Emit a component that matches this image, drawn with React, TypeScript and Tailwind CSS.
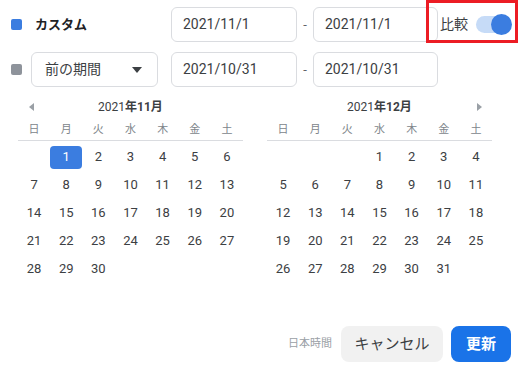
import { useState } from 'react'

const WEEK = ['日', '月', '火', '水', '木', '金', '土']

function monthCells(offset: number, days: number) {
  const cells: (number | null)[] = []
  for (let i = 0; i < offset; i++) cells.push(null)
  for (let d = 1; d <= days; d++) cells.push(d)
  while (cells.length % 7 !== 0) cells.push(null)
  return cells
}

function Calendar({
  title,
  offset,
  days,
  selected,
  prev,
  next,
}: {
  title: [string, string]
  offset: number
  days: number
  selected?: number
  prev?: boolean
  next?: boolean
}) {
  const cells = monthCells(offset, days)
  return (
    <div className="w-[225px]">
      {/* month header */}
      <div className="relative flex h-[20px] items-center justify-center text-[12px] text-[#3c4043]">
        {prev && (
          <span className="absolute left-[11px] top-[6px] h-0 w-0 border-y-[4px] border-r-[5px] border-y-transparent border-r-[#9aa0a6]" />
        )}
        <span>
          {title[0]}
          <span className="font-bold">{title[1]}</span>
        </span>
        {next && (
          <span className="absolute right-[10px] top-[6px] h-0 w-0 border-y-[4px] border-l-[5px] border-y-transparent border-l-[#9aa0a6]" />
        )}
      </div>

      {/* weekdays */}
      <div className="mt-[4px] grid h-[20px] grid-cols-7 items-center border-b border-[#dadce0] pb-[1px] text-[11px] text-[#80868b]">
        {WEEK.map((w) => (
          <span key={w} className="text-center">
            {w}
          </span>
        ))}
      </div>

      <div className="mt-[2px] grid grid-cols-7 text-[13px] text-[#3c4043]">
        {cells.map((d, i) => (
          <div key={i} className="flex h-[28px] items-center justify-center">
            {d !== null &&
              (d === selected ? (
                <span className="flex h-[23px] w-[32px] items-center justify-center rounded-[4px] bg-[#3b7de0] text-white">
                  {d}
                </span>
              ) : (
                <span>{d}</span>
              ))}
          </div>
        ))}
      </div>
    </div>
  )
}

function DateBox({ value, w }: { value: string; w: string }) {
  return (
    <div className={`flex h-[35px] items-center rounded-[6px] border border-[#dadce0] pl-[11px] text-[14px] text-[#3c4043] ${w}`}>
      {value}
    </div>
  )
}

export default function App() {
  const [compare, setCompare] = useState(true)

  return (
    <div
      className="relative flex h-[369px] w-[523px] flex-col overflow-hidden bg-white"
      style={{ fontFamily: 'Roboto, "Noto Sans CJK JP", sans-serif' }}
    >
      {/* range row */}
      <div className="mt-[7px] flex h-[35px] items-center pl-[11px]">
        <div className="flex w-[160px] items-center">
          <span className="h-[11px] w-[11px] rounded-[2px] bg-[#3b7de0]" />
          <span className="ml-[13px] text-[13px] font-bold text-[#202124]">カスタム</span>
        </div>
        <DateBox value="2021/11/1" w="w-[126px]" />
        <span className="w-[16px] text-center text-[13px] text-[#5f6368]">-</span>
        <DateBox value="2021/11/1" w="w-[125px]" />
        <div className="ml-[2px] flex items-center pl-[0px]">
          <span className="text-[14px] text-[#3c4043]">比較</span>
          <button
            onClick={() => setCompare(!compare)}
            className="relative ml-[8px] h-[17px] w-[35px] rounded-full bg-[#c6dbf7]"
          >
            <span className="absolute right-[-1px] top-[-2px] h-[21px] w-[21px] rounded-full bg-[#3b7de0]" />
          </button>
        </div>
      </div>

      {/* red annotation around the compare switch */}
      <div className="pointer-events-none absolute left-[426px] top-0 h-[43px] w-[92px] border-[3px] border-[#ec1c24]" />

      {/* comparison row */}
      <div className="mt-[10px] flex h-[35px] items-center pl-[11px]">
        <span className="h-[11px] w-[11px] rounded-[2px] bg-[#8e939b]" />
        <div className="ml-[9px] flex h-[35px] w-[127px] items-center justify-between rounded-[6px] border border-[#dadce0] pl-[13px] pr-[15px] text-[14px] text-[#3c4043]">
          <span>前の期間</span>
          <span className="h-0 w-0 border-x-[5px] border-t-[6px] border-x-transparent border-t-[#3c4043]" />
        </div>
        <div className="ml-[13px]">
          <DateBox value="2021/10/31" w="w-[126px]" />
        </div>
        <span className="w-[16px] text-center text-[13px] text-[#5f6368]">-</span>
        <DateBox value="2021/10/31" w="w-[125px]" />
      </div>

      {/* calendars */}
      <div className="mt-[10px] flex gap-[24px] pl-[18px]">
        <Calendar title={['2021', '年11月']} offset={1} days={30} selected={1} prev />
        <Calendar title={['2021', '年12月']} offset={3} days={31} next />
      </div>

      {/* footer */}
      <div className="mt-auto mb-[7px] flex items-center justify-end pr-[12px]">
        <span className="text-[11px] text-[#9aa0a6]">日本時間</span>
        <button className="ml-[9px] h-[36px] w-[102px] rounded-[8px] bg-[#f1f1f1] text-[15px] text-[#3c4043]">
          キャンセル
        </button>
        <button className="ml-[8px] h-[36px] w-[60px] rounded-[8px] bg-[#1a73e8] text-[15px] font-bold text-white">
          更新
        </button>
      </div>
    </div>
  )
}
